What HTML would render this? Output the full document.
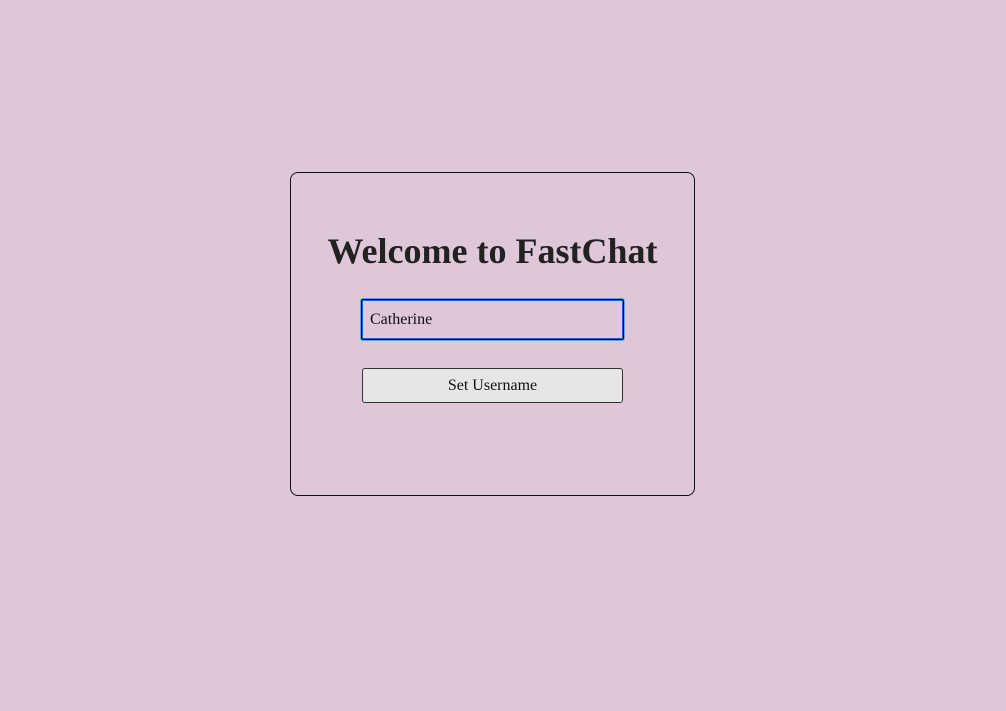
<!DOCTYPE html>
<html><head><style>
html,body{margin:0;padding:0;}
body{width:1006px;height:711px;background:#dec7d8;position:relative;font-family:"Liberation Serif",serif;}
.card{position:absolute;left:290px;top:172px;width:403px;height:322px;border:1px solid #111;border-radius:8px;}
h1{position:absolute;left:290px;width:405px;top:229px;margin:0;text-align:center;font-size:36px;font-weight:bold;color:#222;line-height:44px;}
.inp{position:absolute;left:361px;top:299px;width:261px;height:39px;border:1px solid #000;outline:1px solid #6a9ae8;box-shadow:inset 0 0 0 1px #1a5fd6;border-radius:2px;}
.inp span{position:absolute;left:8px;top:11px;font-size:16px;color:#111;}
.btn{position:absolute;left:362px;top:368px;width:259px;height:33px;background:#e6e6e6;border:1px solid #333;border-radius:3px;text-align:center;line-height:33px;font-size:16px;color:#111;}
</style></head><body>
<div class="card"></div>
<h1>Welcome to FastChat</h1>
<div class="inp"><span>Catherine</span></div>
<div class="btn">Set Username</div>
</body></html>
